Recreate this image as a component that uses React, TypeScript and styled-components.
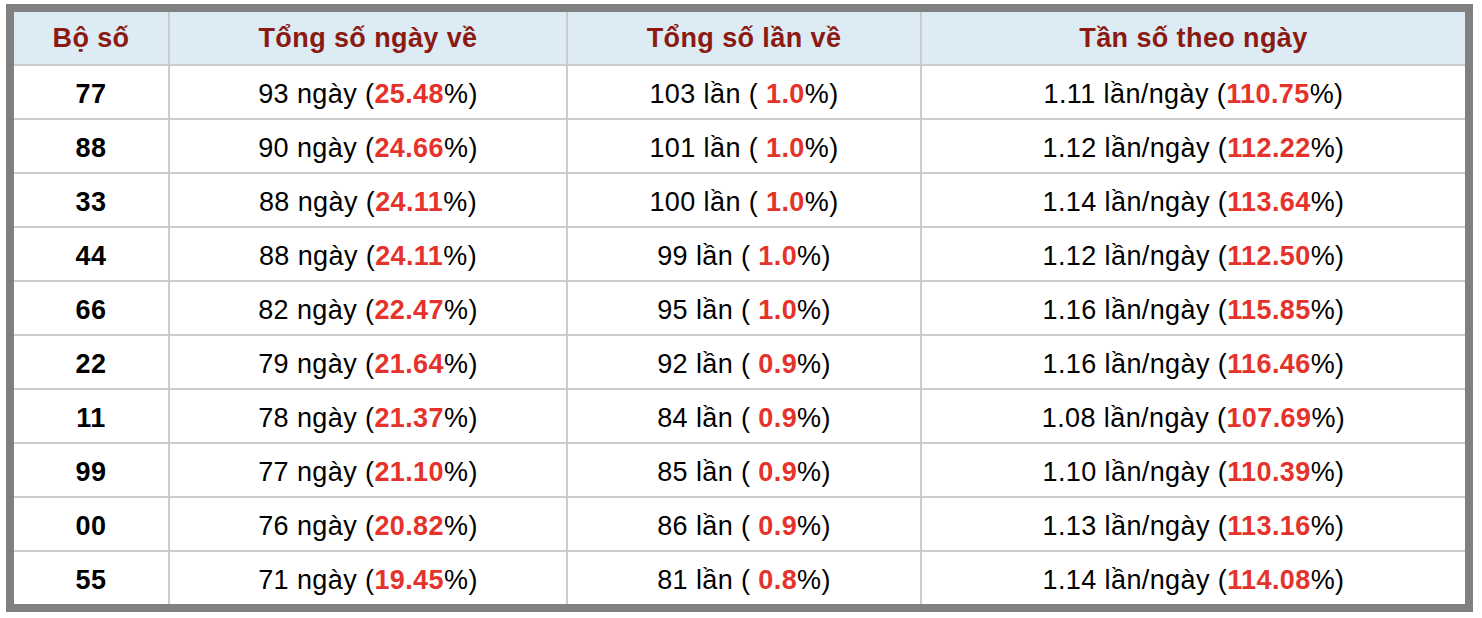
import React from "react";
import styled, { createGlobalStyle } from "styled-components";

const GlobalStyle = createGlobalStyle`
  html, body {
    margin: 0;
    padding: 0;
    background: #ffffff;
  }
  body {
    font-family: "Liberation Sans", Arial, Helvetica, sans-serif;
  }
`;

const Page = styled.div`
  padding: 4px 9px 6px 6px;
`;

const Grid = styled.div`
  display: grid;
  grid-template-columns: 154px 396px 352px 1fr;
  grid-auto-rows: 52px;
  gap: 2px;
  background-color: #cccccc;
  border: 8px solid #808080;
`;

const HeadCell = styled.div`
  display: flex;
  align-items: center;
  justify-content: center;
  background-color: #dcebf4;
  color: #8b1a12;
  font-size: 27px;
  letter-spacing: 0.4px;
  font-weight: bold;
`;

const Cell = styled.div<{ $bold?: boolean }>`
  display: flex;
  align-items: center;
  justify-content: center;
  padding-top: 5px;
  background-color: #ffffff;
  color: #000000;
  font-size: 27px;
  letter-spacing: 0.4px;
  font-weight: ${(p) => (p.$bold ? "bold" : "normal")};
  white-space: pre;
`;

const Red = styled.span`
  color: #e5322a;
  font-weight: bold;
`;

type Row = {
  pair: string;
  days: number;
  dayPct: string;
  times: number;
  timesPct: string;
  rate: string;
  ratePct: string;
};

const rows: Row[] = [
  { pair: "77", days: 93, dayPct: "25.48", times: 103, timesPct: "1.0", rate: "1.11", ratePct: "110.75" },
  { pair: "88", days: 90, dayPct: "24.66", times: 101, timesPct: "1.0", rate: "1.12", ratePct: "112.22" },
  { pair: "33", days: 88, dayPct: "24.11", times: 100, timesPct: "1.0", rate: "1.14", ratePct: "113.64" },
  { pair: "44", days: 88, dayPct: "24.11", times: 99, timesPct: "1.0", rate: "1.12", ratePct: "112.50" },
  { pair: "66", days: 82, dayPct: "22.47", times: 95, timesPct: "1.0", rate: "1.16", ratePct: "115.85" },
  { pair: "22", days: 79, dayPct: "21.64", times: 92, timesPct: "0.9", rate: "1.16", ratePct: "116.46" },
  { pair: "11", days: 78, dayPct: "21.37", times: 84, timesPct: "0.9", rate: "1.08", ratePct: "107.69" },
  { pair: "99", days: 77, dayPct: "21.10", times: 85, timesPct: "0.9", rate: "1.10", ratePct: "110.39" },
  { pair: "00", days: 76, dayPct: "20.82", times: 86, timesPct: "0.9", rate: "1.13", ratePct: "113.16" },
  { pair: "55", days: 71, dayPct: "19.45", times: 81, timesPct: "0.8", rate: "1.14", ratePct: "114.08" },
];

export default function App() {
  return (
    <Page>
      <GlobalStyle />
      <Grid>
        <HeadCell>Bộ số</HeadCell>
        <HeadCell>Tổng số ngày về</HeadCell>
        <HeadCell>Tổng số lần về</HeadCell>
        <HeadCell>Tần số theo ngày</HeadCell>
        {rows.map((r) => (
          <React.Fragment key={r.pair}>
            <Cell $bold>{r.pair}</Cell>
            <Cell>
              {r.days} ngày (<Red>{r.dayPct}</Red>%)
            </Cell>
            <Cell>
              {r.times} lần ( <Red>{r.timesPct}</Red>%)
            </Cell>
            <Cell>
              {r.rate} lần/ngày (<Red>{r.ratePct}</Red>%)
            </Cell>
          </React.Fragment>
        ))}
      </Grid>
    </Page>
  );
}
